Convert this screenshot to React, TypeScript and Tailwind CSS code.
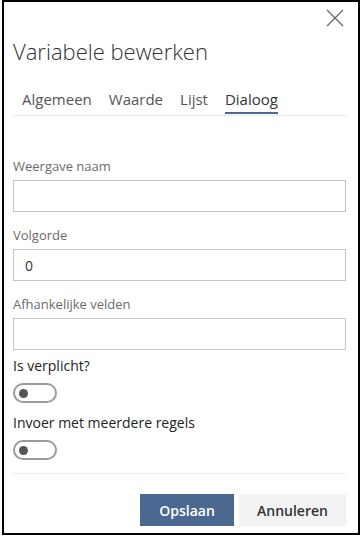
// Edit-variable dialog, "Dialoog" tab

const TABS = ['Algemeen', 'Waarde', 'Lijst', 'Dialoog'];
const ACTIVE_TAB = 'Dialoog';

function TextField({ label, value }: { label: string; value?: string }) {
  return (
    <div className="flex flex-col">
      <label className="text-[13px] leading-[18px] text-[#6b6b6b]">{label}</label>
      <div className="mt-[5px] h-[32px] border border-[#c6c6c6] px-[11px] flex items-center text-[14px] text-[#333]">
        {value}
      </div>
    </div>
  );
}

function Toggle({ label }: { label: string }) {
  return (
    <div className="flex flex-col">
      <span className="text-[14px] leading-[20px] text-[#222]">{label}</span>
      <div className="mt-[7px] w-[44px] h-[20px] rounded-full border-2 border-[#9a9a9a] flex items-center pl-[4px]">
        <div className="w-[9px] h-[9px] rounded-full bg-[#555]" />
      </div>
    </div>
  );
}

export default function App() {
  return (
    <div className="ml-[2px] w-[358px] h-[535px] border-2 border-black bg-white pl-[9px] pr-[12px] flex flex-col" style={{ fontFamily: '"Open Sans", "Noto Sans", sans-serif' }}>
      {/* Close button */}
      <div className="flex justify-end pt-[7px] pr-[2px]">
        <svg width="18" height="18" viewBox="0 0 18 18" fill="none" stroke="#6a6a6a" strokeWidth="1.3">
          <line x1="1" y1="1" x2="17" y2="17" />
          <line x1="17" y1="1" x2="1" y2="17" />
        </svg>
      </div>

      <h1 className="mt-[9px] text-[22px] leading-[30px] font-light text-[#333]">Variabele bewerken</h1>

      {/* Tabs */}
      <div className="mt-[23px] flex gap-[17px] pl-[9px]">
        {TABS.map((tab) => (
          <span
            key={tab}
            className={`text-[15px] leading-[20px] pb-[3px] border-b-2 ${
              tab === ACTIVE_TAB ? 'border-[#4b6891] text-[#333]' : 'border-transparent text-[#555]'
            }`}
          >
            {tab}
          </span>
        ))}
      </div>
      <div className="mt-[1px] h-px bg-[#e8e8e8]" />

      <div className="mt-[41px] flex flex-col gap-[14px]">
        <TextField label="Weergave naam" />
        <TextField label="Volgorde" value="0" />
        <TextField label="Afhankelijke velden" />
      </div>

      <div className="mt-[6px] flex flex-col gap-[10px]">
        <Toggle label="Is verplicht?" />
        <Toggle label="Invoer met meerdere regels" />
      </div>

      <div className="mt-[13px] h-px bg-[#ececec]" />

      <div className="mt-[20px] flex justify-end gap-[5px]">
        <button className="w-[94px] h-[32px] bg-[#4b6891] text-white text-[14px] font-semibold">Opslaan</button>
        <button className="w-[107px] h-[32px] bg-[#f3f3f3] text-[#333] text-[14px] font-semibold">Annuleren</button>
      </div>
    </div>
  );
}
